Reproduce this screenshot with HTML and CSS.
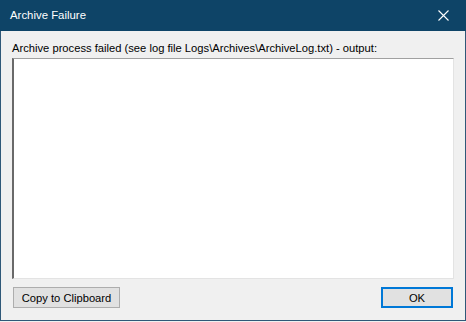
FILE: index.html
```html
<!DOCTYPE html>
<html lang="en">
<head>
    <meta charset="UTF-8">
    <title>Archive Failure</title>
    <link rel="stylesheet" href="styles.css">
</head>
<body>
    <div class="dialog">
        <div class="titlebar">
            <span class="title">Archive Failure</span>
            <button type="button" class="close" aria-label="Close">
                <svg width="11" height="11" viewBox="0 0 11 11">
                    <path d="M0.5 0.5 L10.5 10.5 M10.5 0.5 L0.5 10.5" stroke="#fff" stroke-width="1.1" fill="none"/>
                </svg>
            </button>
        </div>
        <div class="body">
            <label class="label" for="output">Archive process failed (see log file Logs\Archives\ArchiveLog.txt) - output:</label>
            <textarea id="output" class="output" readonly></textarea>
            <div class="buttons">
                <button type="button" class="btn copy">Copy to Clipboard</button>
                <button type="button" class="btn ok">OK</button>
            </div>
        </div>
    </div>
</body>
</html>
```

FILE: styles.css
```css
body {
    margin: 0;
    font-family: "Liberation Sans", Arial, sans-serif;
    font-size: 11.2px;
    background-color: #f0f0f0;
}
.dialog {
    width: 466px;
    height: 321px;
    box-sizing: border-box;
    display: flex;
    flex-direction: column;
    background-color: #f0f0f0;
    border: 1px solid #2f5878;
    border-top: none;
}
.titlebar {
    height: 31px;
    margin: 0 -1px;
    display: flex;
    align-items: center;
    justify-content: space-between;
    background-color: #0e4467;
    color: #fff;
}
.title {
    padding-left: 10px;
    font-size: 11.4px;
    padding-bottom: 1px;
}
.close {
    width: 46px;
    height: 31px;
    border: none;
    background: none;
    padding: 0 0 1px 0;
    display: flex;
    align-items: center;
    justify-content: center;
}
.body {
    flex: 1;
    display: flex;
    flex-direction: column;
    padding: 10px 11px 12px 11px;
}
.label {
    line-height: 15px;
    color: #000;
    margin-bottom: 2px;
}
.output {
    height: 221px;
    box-sizing: border-box;
    margin: 0;
    resize: none;
    background-color: #fff;
    border-style: solid;
    border-width: 1px 1px 1px 2px;
    border-color: #a0a0a0 #e3e3e3 #e3e3e3 #696969;
    outline: none;
}
.buttons {
    display: flex;
    justify-content: space-between;
    margin-top: 8px;
    padding: 0 1px 0 1px;
}
.btn {
    height: 21px;
    box-sizing: border-box;
    background-color: #e1e1e1;
    border: 1px solid #adadad;
    font-family: "Liberation Sans", Arial, sans-serif;
    font-size: 11.2px;
    color: #000;
    padding: 0;
}
.copy {
    width: 107px;
}
.ok {
    width: 72px;
    border: 2px solid #0078d7;
}
```
